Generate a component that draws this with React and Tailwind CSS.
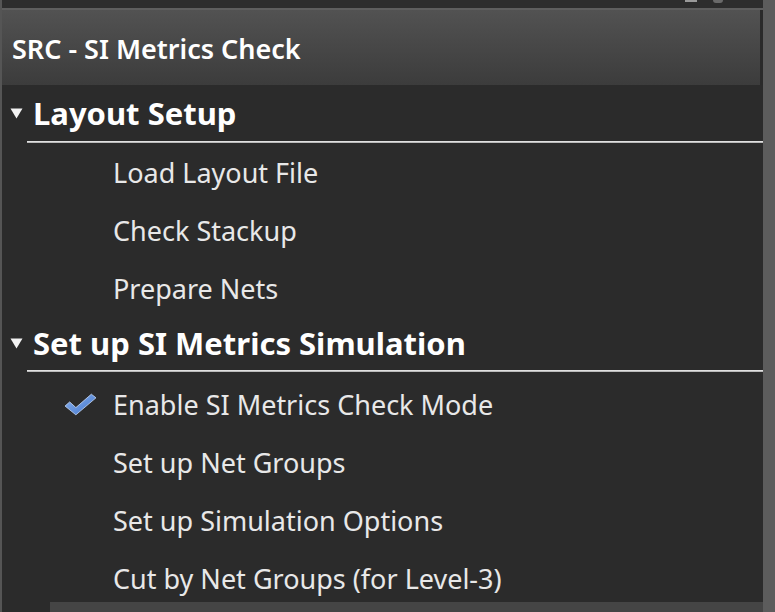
import React from "react";

const font = { fontFamily: '"Noto Sans", "Open Sans", sans-serif' };

const Triangle = () => (
  <svg width="13" height="11" viewBox="0 0 13 11" className="shrink-0">
    <path d="M0.5 0.5 L12.5 0.5 L6.5 10.5 Z" fill="#f2f2f2" />
  </svg>
);

const Check = () => (
  <svg width="33" height="23" viewBox="0 0 32 22">
    <defs>
      <linearGradient id="chk" x1="0" y1="0" x2="1" y2="1">
        <stop offset="0" stopColor="#8db4ee" />
        <stop offset="1" stopColor="#3f73cc" />
      </linearGradient>
    </defs>
    <path
      d="M1 12.5 L5.5 8.5 L11.5 14 L26.5 1 L31 4.5 L11.5 21 Z"
      fill="url(#chk)"
      stroke="#c2d6f4"
      strokeWidth="0.8"
      strokeLinejoin="round"
    />
  </svg>
);

const Section = ({ title, height, children }) => (
  <div>
    <div className={`flex items-center ${height}`}>
      <div className="w-[31px] flex pl-[8px]">
        <Triangle />
      </div>
      <span className="text-[31px] font-bold text-white leading-none">
        {title}
      </span>
    </div>
    <div className="ml-[25px] h-[2px] bg-gradient-to-b from-[#f4f4f4] to-[#a8a8a8]" />
    {children}
  </div>
);

const Item = ({ label, checked }) => (
  <div className="flex items-center h-[58px]">
    <div className="w-[111px] flex justify-end pr-[16px]">
      {checked && <Check />}
    </div>
    <span className="text-[27px] text-[#e8e8e8] leading-none">{label}</span>
  </div>
);

export default function App() {
  return (
    <div
      className="w-[775px] h-[612px] flex bg-[#2b2b2b] overflow-hidden"
      style={font}
    >
      <div className="flex-1 flex flex-col min-w-0 border-l-2 border-[#555555]">
        <div className="h-[8px] bg-[#2d2d2d] flex justify-end items-start pr-[40px] gap-[16px]">
          <div className="w-[12px] h-[2px] bg-[#9a9a9a]" />
          <div className="w-[10px] h-[3px] bg-[#6a6a6a] rounded-b" />
        </div>
        <div className="h-[2px] bg-[#5e5e5e]" />
        <div className="h-[75px] flex items-center pl-[10px] pt-[2px] bg-gradient-to-b from-[#525252] to-[#3c3c3c] border-r-[3px] border-[#2a2a2a]">
          <span className="text-[27px] font-semibold text-white leading-none">
            SRC - SI Metrics Check
          </span>
        </div>
        <div className="flex-1 overflow-hidden">
          <Section title="Layout Setup" height="h-[56px]">
            <Item label="Load Layout File" />
            <Item label="Check Stackup" />
            <Item label="Prepare Nets" />
          </Section>
          <Section title="Set up SI Metrics Simulation" height="h-[53px]">
            <div className="h-[3px]" />
            <Item label="Enable SI Metrics Check Mode" checked />
            <Item label="Set up Net Groups" />
            <Item label="Set up Simulation Options" />
            <Item label="Cut by Net Groups (for Level-3)" />
          </Section>
        </div>
        <div className="h-[10px] flex">
          <div className="w-[48px]" />
          <div className="flex-1 bg-[#454545]" />
        </div>
      </div>
      <div className="w-[12px] bg-[#5c5c5c]" />
    </div>
  );
}
